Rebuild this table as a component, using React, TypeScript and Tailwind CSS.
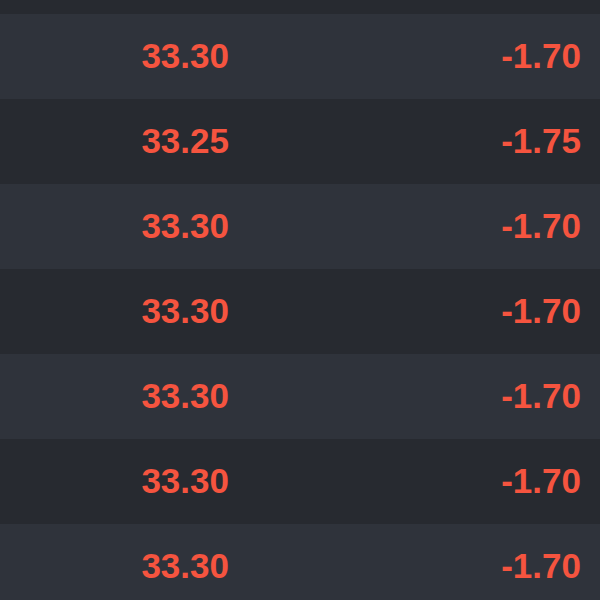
const rows = [
  { price: '33.30', change: '-1.70' },
  { price: '33.25', change: '-1.75' },
  { price: '33.30', change: '-1.70' },
  { price: '33.30', change: '-1.70' },
  { price: '33.30', change: '-1.70' },
  { price: '33.30', change: '-1.70' },
  { price: '33.30', change: '-1.70' },
];

export default function App() {
  return (
    <div className="h-[600px] w-[600px] overflow-hidden bg-[#272a30] font-['Liberation_Sans',Arial,sans-serif]">
      <div className="h-[14px] bg-[#272a30]" />
      {rows.map((r, i) => (
        <div
          key={i}
          className={`grid h-[85px] grid-cols-[248px_1fr] items-center text-[35px] font-bold text-[#f5543f] ${
            i % 2 === 0 ? 'bg-[#2f333b]' : 'bg-[#272a30]'
          }`}
        >
          <div className="pr-[19px] text-right">{r.price}</div>
          <div className="pr-[19px] text-right">{r.change}</div>
        </div>
      ))}
    </div>
  );
}
